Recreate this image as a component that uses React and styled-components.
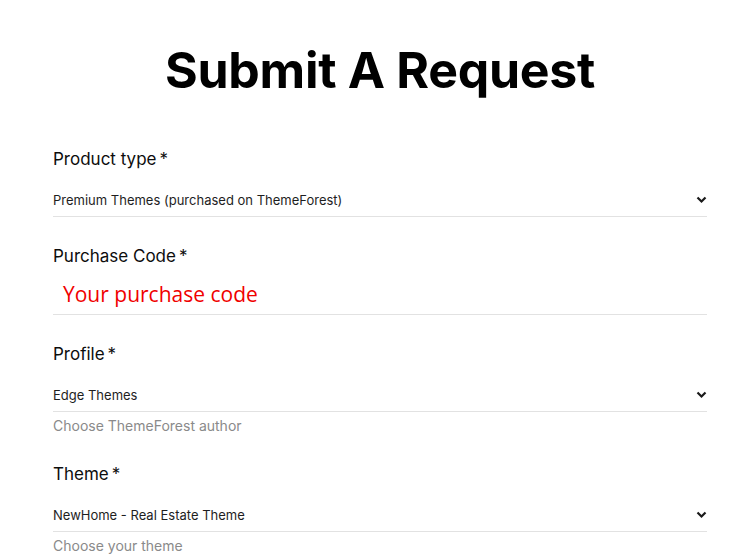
import React from "react";
import styled, { createGlobalStyle } from "styled-components";

const Global = createGlobalStyle`
  body {
    margin: 0;
    background: #ffffff;
    font-family: Inter, "Noto Sans", sans-serif;
    color: #111111;
  }
`;

const Page = styled.div`
  padding: 38px 45px 0 53px;
`;

const Title = styled.h1`
  margin: 0 0 44px;
  text-align: center;
  font-size: 50px;
  line-height: 65px;
  font-weight: 700;
  letter-spacing: -0.3px;
  color: #000;
`;

const Field = styled.div`
  margin-bottom: ${props => (props.gap || 27)}px;
`;

const Label = styled.div`
  font-size: 17px;
  line-height: 24px;
  font-weight: 400;
  color: #0d0d0d;

  span {
    margin-left: 3px;
  }
`;

const SelectBox = styled.div`
  display: flex;
  justify-content: space-between;
  align-items: center;
  padding: 20px 0 7px;
  line-height: 18px;
  font-size: 13px;
  color: #1e1e1e;
  border-bottom: 1px solid #e2e2e2;
`;

const InputBox = styled.div`
  padding: 12px 0 6px 10px;
  line-height: 28px;
  font-family: "Open Sans", sans-serif;
  font-size: 21px;
  color: #f00000;
  border-bottom: 1px solid #e2e2e2;
`;

const Help = styled.div`
  margin-top: 4px;
  font-size: 14px;
  line-height: 20px;
  color: #8a8a8a;
`;

const Chevron = () => (
  <svg width="11" height="8" viewBox="0 0 11 8">
    <polyline points="1.5,1.5 5.5,5.5 9.5,1.5" fill="none" stroke="#1a1a1a" strokeWidth="2.2" />
  </svg>
);

function Select({ value }) {
  return (
    <SelectBox>
      {value}
      <Chevron />
    </SelectBox>
  );
}

export default function App() {
  return (
    <Page>
      <Global />
      <Title>Submit A Request</Title>

      <Field>
        <Label>Product type<span>*</span></Label>
        <Select value="Premium Themes (purchased on ThemeForest)" />
      </Field>

      <Field>
        <Label>Purchase Code<span>*</span></Label>
        <InputBox>Your purchase code</InputBox>
      </Field>

      <Field gap={26}>
        <Label>Profile<span>*</span></Label>
        <Select value="Edge Themes" />
        <Help>Choose ThemeForest author</Help>
      </Field>

      <Field gap={0}>
        <Label>Theme<span>*</span></Label>
        <Select value="NewHome - Real Estate Theme" />
        <Help>Choose your theme</Help>
      </Field>
    </Page>
  );
}
